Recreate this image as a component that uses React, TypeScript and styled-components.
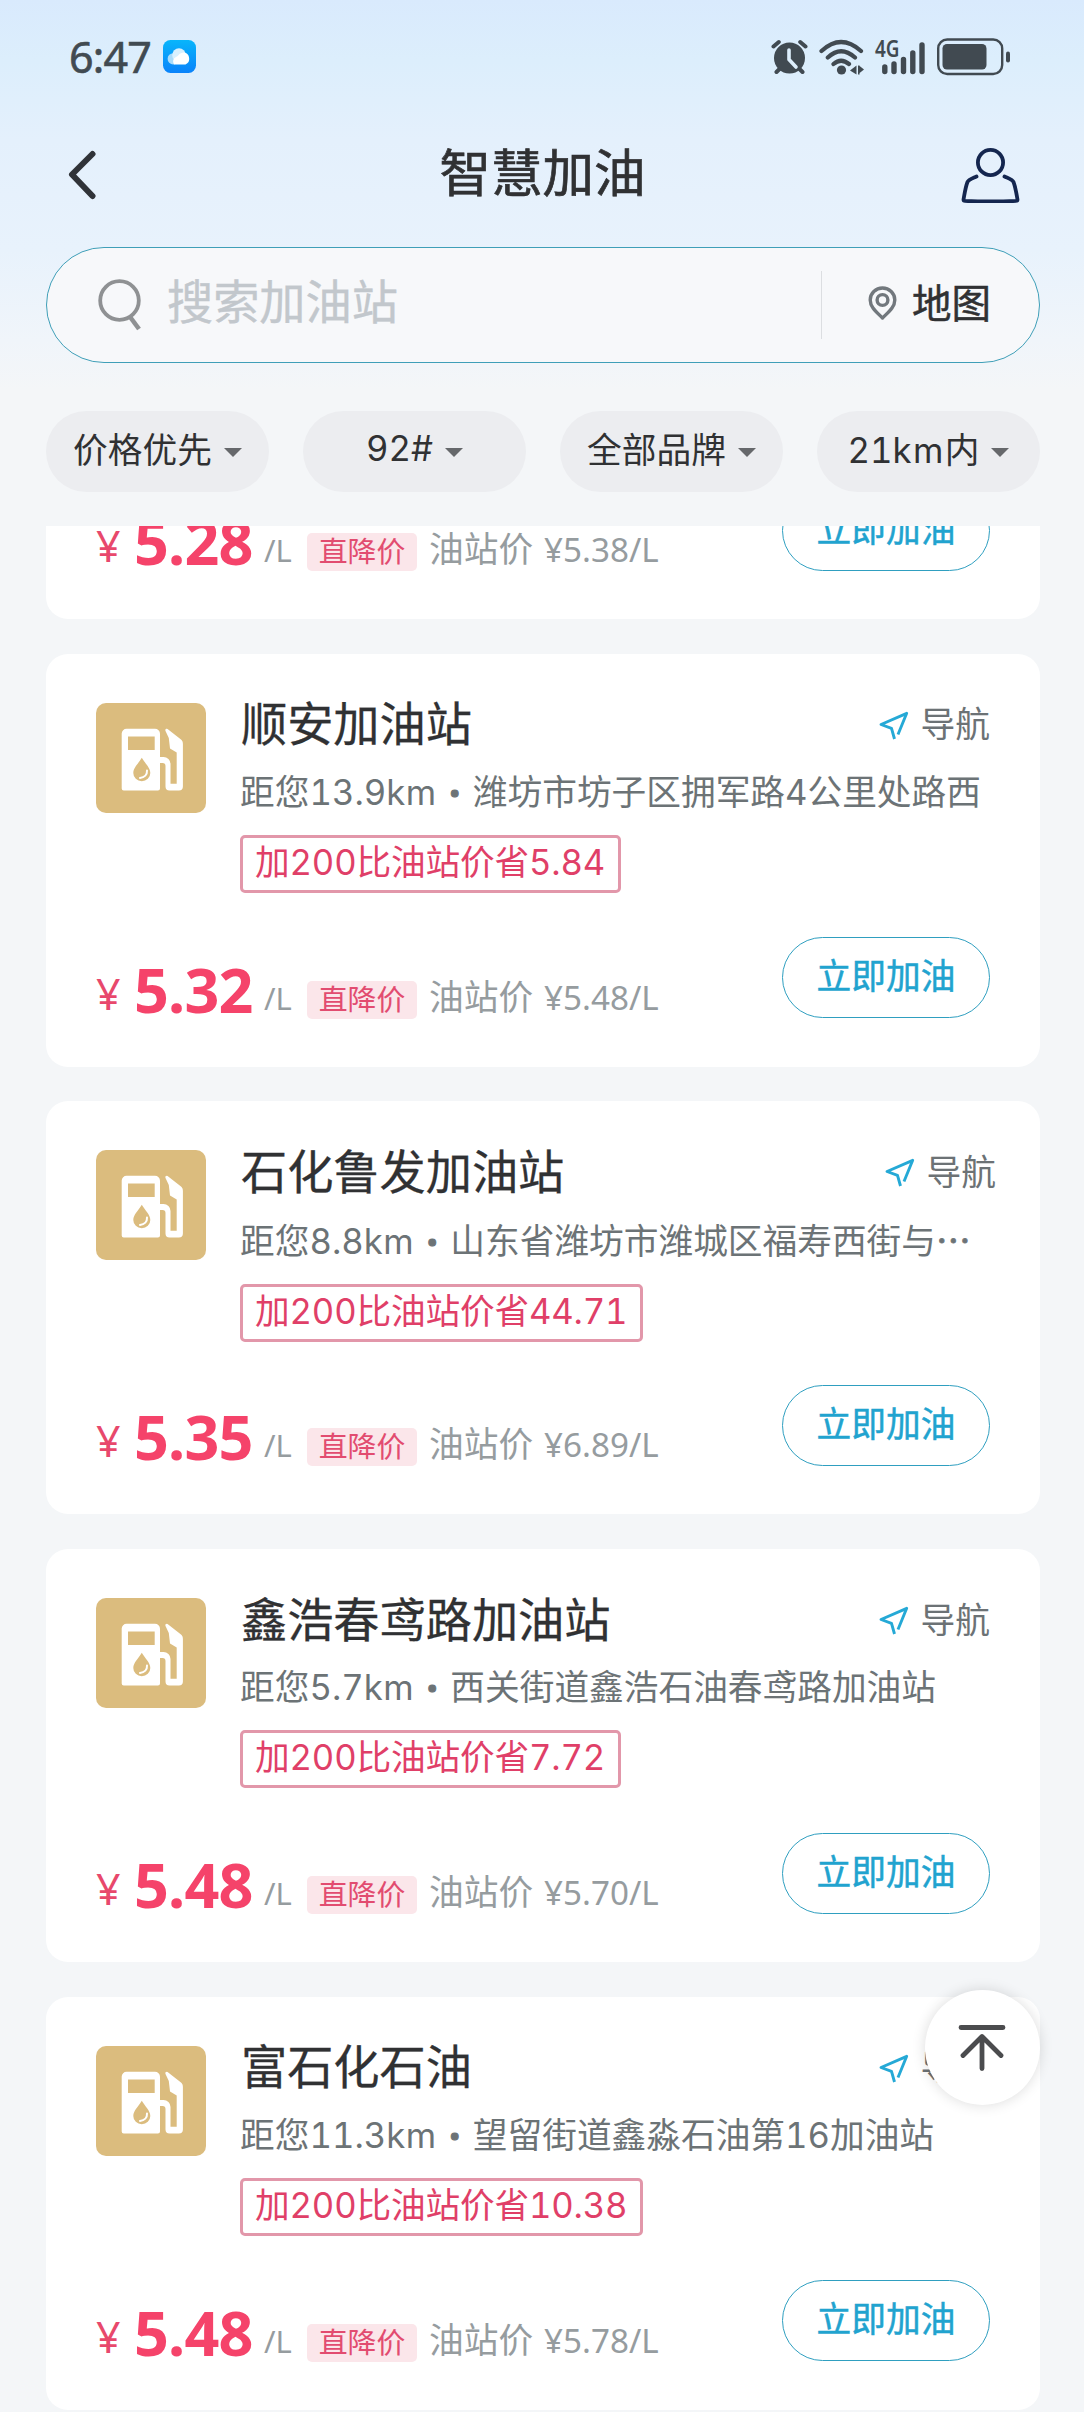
import React from "react";
import styled, { createGlobalStyle } from "styled-components";

const GlobalStyle = createGlobalStyle`
  * { box-sizing: border-box; }
  body { margin: 0; background: #f4f6f8; }
  button { font: inherit; border: 0; background: none; padding: 0; color: inherit; }
  svg { display: block; flex: none; }
`;

const UI = `Inter, "Noto Sans CJK SC", sans-serif`;
const NUM = `"Noto Sans", "Noto Sans CJK SC", sans-serif`;

const Screen = styled.div`
  position: relative;
  width: 1084px;
  height: 2412px;
  overflow: hidden;
  display: flex;
  flex-direction: column;
  font-family: ${UI};
  font-variant-numeric: tabular-nums;
  color: #303133;
  background: linear-gradient(180deg, #d9eafd 0px, #dceefc 60px, #e4f0fc 140px, #e8f2fc 250px, #f0f5fa 340px, #f4f6f8 390px);
`;

const StatusBar = styled.div`
  height: 114px;
  padding: 0 74px 1px 69px;
  display: flex;
  align-items: center;
  justify-content: space-between;
  color: #414a51;
`;

const StatusSide = styled.div<{ $gap: number }>`
  display: flex;
  align-items: center;
  gap: ${(p) => p.$gap}px;
`;

const Clock = styled.span`
  font: 400 43px/48px ${NUM};
  -webkit-text-stroke: 0.6px currentColor;
  letter-spacing: -0.8px;
  width: 81px;
  white-space: nowrap;
`;

const NavBar = styled.header`
  height: 133px;
  padding: 0 64px;
  display: grid;
  grid-template-columns: 60px 1fr 60px;
  align-items: center;
  justify-items: center;
`;

const Title = styled.h1`
  margin: 0;
  font-size: 51.5px;
  line-height: 60px;
  font-weight: 400;
  -webkit-text-stroke: 0.7px currentColor;
  padding: 0 0 15px 1px;
`;

const IconButton = styled.button<{ $align: string }>`
  justify-self: ${(p) => p.$align};
  padding-bottom: 11px;
`;

const SearchBox = styled.div`
  flex: none;
  height: 116px;
  margin: 0 44px 0 46px;
  border: 1.5px solid #3f9fb8;
  border-radius: 58px;
  background: #f7f8fa;
  display: flex;
  align-items: center;
  padding-left: 51px;
`;

const Placeholder = styled.span`
  flex: 1;
  padding: 0 0 6px 24px;
  font-size: 46.2px;
  line-height: 60px;
  color: #c2c7cc;
  -webkit-text-stroke: 0.4px currentColor;
`;

const MapButton = styled.button`
  height: 68px;
  width: 218px;
  border-left: 1px solid #dcdee1;
  display: flex;
  align-items: center;
  padding: 0 0 9px 46px;
  gap: 15px;
  font-size: 39.5px;
  -webkit-text-stroke: 0.5px currentColor;

  svg {
    margin-top: 6px;
  }
`;

const Filters = styled.div`
  flex: none;
  display: grid;
  grid-template-columns: repeat(4, 1fr);
  gap: 34px;
  margin: 48px 44px 0 46px;
  height: 81px;
`;

const Pill = styled.button`
  border-radius: 41px;
  background: #ecedf0;
  display: flex;
  align-items: center;
  justify-content: center;
  gap: 12px;
  font-size: 34.7px;
  white-space: nowrap;
  padding-bottom: 8px;
`;

const Caret = styled.i`
  margin-top: 9px;
  border: 9px solid transparent;
  border-top-color: #66686b;
  border-bottom-width: 0;
`;

const Km = styled.span<{ $spacing: number }>`
  letter-spacing: ${(p) => p.$spacing}px;
`;

const List = styled.main`
  flex: 1;
  min-height: 0;
  margin-top: 34px;
  padding: 0 44px 0 46px;
  overflow: hidden;
  display: flex;
  flex-direction: column;
  gap: 34.7px;
`;

const Card = styled.article`
  flex: none;
  height: 413px;
  border-radius: 22px;
  background: #fff;
  padding: 44.5px 50px 48.5px 50px;
  display: flex;
  flex-direction: column;
  justify-content: space-between;
`;

const ScrolledCard = styled(Card)`
  height: 93px;
  border-radius: 0 0 22px 22px;
  padding-top: 0;
  overflow: hidden;
  justify-content: flex-end;
`;

const CardTop = styled.div`
  display: flex;
  gap: 34px;
`;

const Tile = styled.div`
  flex: none;
  width: 110px;
  height: 110px;
  margin-top: 4.5px;
  border-radius: 10px;
  background: #dbbc7e;
`;

const Info = styled.div`
  flex: 1;
  min-width: 0;
  display: flex;
  flex-direction: column;
  align-items: flex-start;
`;

const NameRow = styled.div<{ $shift?: boolean }>`
  width: ${(p) => (p.$shift ? 756 : 750)}px;
  height: 52px;
  display: flex;
  justify-content: space-between;
  align-items: center;
`;

const Name = styled.h2`
  margin: 0;
  padding-left: 1px;
  font-size: 46.2px;
  line-height: 52px;
  font-weight: 400;
  -webkit-text-stroke: 0.3px currentColor;
`;

const NavLink = styled.button`
  display: flex;
  align-items: center;
  gap: 12px;
  font-size: 34.7px;
  line-height: 48px;
  color: #6c7275;

  svg {
    margin-top: 3px;
  }
`;

const Desc = styled.p`
  margin: 19.5px 0 21px;
  font-size: 34.7px;
  line-height: 44px;
  color: #6c7376;
  white-space: nowrap;
`;

const Dot = styled.span`
  display: inline-block;
  width: 36px;
  text-align: center;
  font-weight: 900;
  -webkit-text-stroke: 1px currentColor;
`;

const Ellipsis = styled.span`
  font-family: "Noto Sans CJK SC", sans-serif;
  -webkit-text-stroke: 0.8px currentColor;
`;

const Saving = styled.div`
  height: 58px;
  padding: 0 12.5px 0 12px;
  border: 3px solid #e297aa;
  border-radius: 5px;
  font-size: 34.7px;
  line-height: 49px;
  letter-spacing: -0.18px;
  color: #e03f68;
  white-space: nowrap;
`;

const Footer = styled.div`
  flex: none;
  height: 81px;
  display: flex;
  justify-content: space-between;
`;

const PriceLine = styled.div`
  display: flex;
  align-items: baseline;
  white-space: nowrap;
  font-family: ${NUM};
  padding-top: 9.5px;
  color: #969c9f;
`;

const Yen = styled.span`
  width: 38px;
  font-size: 43px;
  line-height: 70px;
  color: #e8486c;
`;

const Price = styled.strong`
  width: 130px;
  font-size: 61px;
  line-height: 80px;
  letter-spacing: -0.8px;
  font-weight: 700;
  color: #f5436a;
  transform: translateY(2.5px);
`;

const Unit = styled.span`
  width: 43px;
  font-size: 31px;
`;

const DropTag = styled.span`
  width: 110px;
  height: 38px;
  border-radius: 5px;
  background: #fbe6ea;
  color: #e24c70;
  font: 28.9px/37px ${UI};
  text-align: center;
`;

const Original = styled.span`
  margin-left: 12px;
  font-size: 34.7px;
`;

const OriginalPrice = styled.span`
  margin-left: 11px;
  font-size: 33.2px;
`;

const FuelButton = styled.button`
  width: 208px;
  height: 81px;
  border: 1.5px solid #2f9fc0;
  border-radius: 41px;
  font-size: 34.7px;
  -webkit-text-stroke: 0.5px currentColor;
  line-height: 74px;
  padding-bottom: 3px;
  color: #21a3cf;
`;

const ToTop = styled.button`
  position: absolute;
  left: 924.5px;
  top: 1990px;
  width: 115px;
  height: 115px;
  border-radius: 50%;
  background: #fff;
  box-shadow: 0 0 14px rgba(0, 0, 0, 0.14);
  display: grid;
  place-items: center;
  padding-top: 3px;
`;

const CloudApp = () => (
  <svg width="33" height="33" viewBox="0 0 33 33">
    <defs>
      <linearGradient id="sky" x1="0" y1="0" x2="0" y2="1">
        <stop offset="0" stopColor="#08b5fb" />
        <stop offset="1" stopColor="#0a83fa" />
      </linearGradient>
    </defs>
    <rect width="33" height="33" rx="7.5" fill="url(#sky)" />
    <circle cx="10.2" cy="18.8" r="5.6" fill="#a9dcfb" />
    <circle cx="16" cy="15" r="6.8" fill="#d8f0fe" />
    <path d="M11 24.4a5 5 0 0 1 2-7.5c2 .2 3-4.3 8-4.3a6.2 6.2 0 0 1 1.500 11.800z" fill="#fff" />
  </svg>
);

const Alarm = () => (
  <svg width="37" height="36" viewBox="0 0 37 36">
    <g stroke="#414a51" strokeWidth="4" strokeLinecap="round" fill="none">
      <path d="M2.500 7.500 7.800 3M34.500 7.500 29.200 3M9.500 29 5.500 33M27.500 29 31.500 33" />
    </g>
    <circle cx="18.500" cy="19" r="15.500" fill="#414a51" />
    <path d="M18 11v9.500l7 7.500" stroke="#deeffc" strokeWidth="3.600" strokeLinecap="round" strokeLinejoin="round" fill="none" />
  </svg>
);

const Wifi = () => (
  <svg width="45" height="36" viewBox="0 0 45 36">
    <g stroke="#414a51" strokeWidth="4.200" strokeLinecap="round" fill="none">
      <path d="M2.500 12Q22 -6 42 12M8.800 18.500Q22 6 36 18.500M14.500 25Q22 18.500 30 25" />
    </g>
    <circle cx="22.500" cy="31" r="4.600" fill="#414a51" />
    <path d="M37.500 26.500v9l-6.500-4zM39 26.500h1.600v9H39zM40 26.500l5 4-5 4z" fill="#414a51" />
  </svg>
);

const Signal = () => (
  <svg width="51" height="38" viewBox="0 0 51 38" overflow="visible">
    <text x="0" y="18.500" fontFamily="Noto Sans, sans-serif" fontSize="22.500" fontWeight="600" textLength="24.500" lengthAdjust="spacingAndGlyphs" fill="#414a51">4G</text>
    <g stroke="#414a51" strokeWidth="5.400" strokeLinecap="round">
      <path d="M9.800 29v4.500M19 26v7.500M28.500 21.500v12M37.800 15v18.500M47 7v26.500" />
    </g>
  </svg>
);

const Battery = () => (
  <svg width="73" height="38" viewBox="0 0 73 38">
    <rect x="1.200" y="1.500" width="64" height="34.500" rx="9" fill="none" stroke="#414a51" strokeWidth="2.400" />
    <rect x="5.500" y="6" width="44" height="25.500" rx="4.500" fill="#414a51" />
    <rect x="69" y="13.500" width="4" height="11" rx="2" fill="#414a51" />
  </svg>
);

const BackIcon = () => (
  <svg width="34" height="50" viewBox="0 0 34 50">
    <path d="M28.500 4 8 24.500 28.500 46" fill="none" stroke="#303338" strokeWidth="6" strokeLinecap="round" strokeLinejoin="round" />
  </svg>
);

const UserIcon = () => (
  <svg width="59" height="55" viewBox="0 0 59 55">
    <g fill="none" stroke="#14264f" strokeWidth="3.800" strokeLinecap="round" strokeLinejoin="round">
      <circle cx="29.500" cy="14.500" r="12.600" />
      <path d="M15.500 28.500C11 30.500 7.500 31.500 6.500 34 4.500 39 3.500 46 2.500 51.500c0 .8.500 1.300 1.500 1.300 16 .9 35 .9 51 0 1 0 1.500-.5 1.500-1.300C55.500 46 54.500 39 52.500 34c-1-2.500-4.500-3.500-9-5.500" />
    </g>
  </svg>
);

const SearchIcon = () => (
  <svg width="45" height="52" viewBox="0 0 45 52">
    <circle cx="21.500" cy="21.500" r="19.300" fill="none" stroke="#8f9193" strokeWidth="3.800" />
    <path d="M32.500 38.500 41 50" stroke="#8f9193" strokeWidth="4.600" />
  </svg>
);

const PinIcon = () => (
  <svg width="29" height="35" viewBox="0 0 29 35">
    <g fill="none" stroke="#72787d" strokeWidth="3.400" strokeLinejoin="round">
      <path d="M14.500 32C8 25.500 2.200 21 2.200 14a12.300 12 0 0 1 24.600 0c0 7-5.800 11.500-12.300 18z" />
      <circle cx="14.500" cy="14" r="5.400" />
    </g>
  </svg>
);

const PlaneIcon = () => (
  <svg width="30" height="30" viewBox="0 0 30 30">
    <path d="M19 23.500 27.700 2.300 2 13.500l10.500 3.800L15.500 28" fill="none" stroke="#25a9d6" strokeWidth="2.900" strokeLinejoin="round" />
  </svg>
);

const PumpIcon = () => (
  <svg width="110" height="110" viewBox="0 0 110 110">
    <path fillRule="evenodd" fill="#fff" d="M30.500 25.800H59a5 5 0 0 1 5 5V54h3.500a7 7 0 0 1 7 7v19.800h6.200V49.500L74 45.500 72.800 35l-3.300-7c-.8-2 1.500-2.800 2.700-1.600L85 36.500c1.500 1.500 1.900 2.500 1.900 4.500v42.500a4 4 0 0 1-4 4H73.500a4 4 0 0 1-4-4V63a3 3 0 0 0-3-3H64v25.500a2 2 0 0 1-2 2H27.700a2 2 0 0 1-2-2v-55a4.800 4.800 0 0 1 4.800-4.700zM32 33.500V47h26.700V33.500z" />
    <path d="M45.800 54.700C42.500 60.500 37.300 64.500 37.300 70a8.500 8.300 0 0 0 17 0c0-5.500-5.200-9.500-8.500-15.300z" fill="#dbbc7e" />
    <path d="M51 67.500c.3 4-2.500 7-7 7.500" stroke="#fff" strokeWidth="2" strokeLinecap="round" fill="none" />
  </svg>
);

const TopIcon = () => (
  <svg width="48" height="48" viewBox="0 0 48 48">
    <path d="M3 3.500h42M24 13v31.500M5 31.500 24 12.500l19 19" fill="none" stroke="#4b4c4e" strokeWidth="4.800" strokeLinecap="round" strokeLinejoin="round" transform="translate(0 -1)" />
  </svg>
);

type Offer = { price: string; original: string };
type Station = Offer & {
  name: string;
  distance: string;
  address: string;
  saving: string;
  truncated?: boolean;
};

const stations: Station[] = [
  { name: "顺安加油站", distance: "13.9", address: "潍坊市坊子区拥军路4公里处路西", saving: "5.84", price: "5.32", original: "5.48" },
  { name: "石化鲁发加油站", distance: "8.8", address: "山东省潍坊市潍城区福寿西街与", saving: "44.71", price: "5.35", original: "6.89", truncated: true },
  { name: "鑫浩春鸢路加油站", distance: "5.7", address: "西关街道鑫浩石油春鸢路加油站", saving: "7.72", price: "5.48", original: "5.70" },
  { name: "富石化石油", distance: "11.3", address: "望留街道鑫淼石油第16加油站", saving: "10.38", price: "5.48", original: "5.78" },
];

const filters: { id: string; label: React.ReactNode }[] = [
  { id: "sort", label: "价格优先" },
  { id: "fuel", label: "92#" },
  { id: "brand", label: "全部品牌" },
  { id: "range", label: <span>21<Km $spacing={1.4}>km</Km>内</span> },
];

const OfferRow = ({ price, original }: Offer) => (
  <Footer>
    <PriceLine>
      <Yen>¥</Yen>
      <Price>{price}</Price>
      <Unit>/L</Unit>
      <DropTag>直降价</DropTag>
      <Original>油站价</Original>
      <OriginalPrice>¥{original}/L</OriginalPrice>
    </PriceLine>
    <FuelButton>立即加油</FuelButton>
  </Footer>
);

const StationCard = ({ station: s }: { station: Station }) => (
  <Card>
    <CardTop>
      <Tile><PumpIcon /></Tile>
      <Info>
        <NameRow $shift={s.truncated}>
          <Name>{s.name}</Name>
          <NavLink><PlaneIcon />导航</NavLink>
        </NameRow>
        <Desc>
          距您{s.distance}<Km $spacing={0.6}>km</Km><Dot>·</Dot>{s.address}
          {s.truncated && <Ellipsis>…</Ellipsis>}
        </Desc>
        <Saving>加200比油站价省{s.saving}</Saving>
      </Info>
    </CardTop>
    <OfferRow price={s.price} original={s.original} />
  </Card>
);

export default function App() {
  return (
    <>
      <GlobalStyle />
      <Screen>
        <StatusBar>
          <StatusSide $gap={13}>
            <Clock>6:47</Clock>
            <CloudApp />
          </StatusSide>
          <StatusSide $gap={11}>
            <Alarm />
            <Wifi />
            <Signal />
            <Battery />
          </StatusSide>
        </StatusBar>
        <NavBar>
          <IconButton $align="start" aria-label="返回"><BackIcon /></IconButton>
          <Title>智慧加油</Title>
          <IconButton $align="end" aria-label="我的"><UserIcon /></IconButton>
        </NavBar>
        <SearchBox>
          <SearchIcon />
          <Placeholder>搜索加油站</Placeholder>
          <MapButton><PinIcon />地图</MapButton>
        </SearchBox>
        <Filters>
          {filters.map((f) => (
            <Pill key={f.id}>{f.label}<Caret /></Pill>
          ))}
        </Filters>
        <List>
          <ScrolledCard>
            <OfferRow price="5.28" original="5.38" />
          </ScrolledCard>
          {stations.map((s) => (
            <StationCard key={s.name} station={s} />
          ))}
        </List>
        <ToTop aria-label="回到顶部"><TopIcon /></ToTop>
      </Screen>
    </>
  );
}
